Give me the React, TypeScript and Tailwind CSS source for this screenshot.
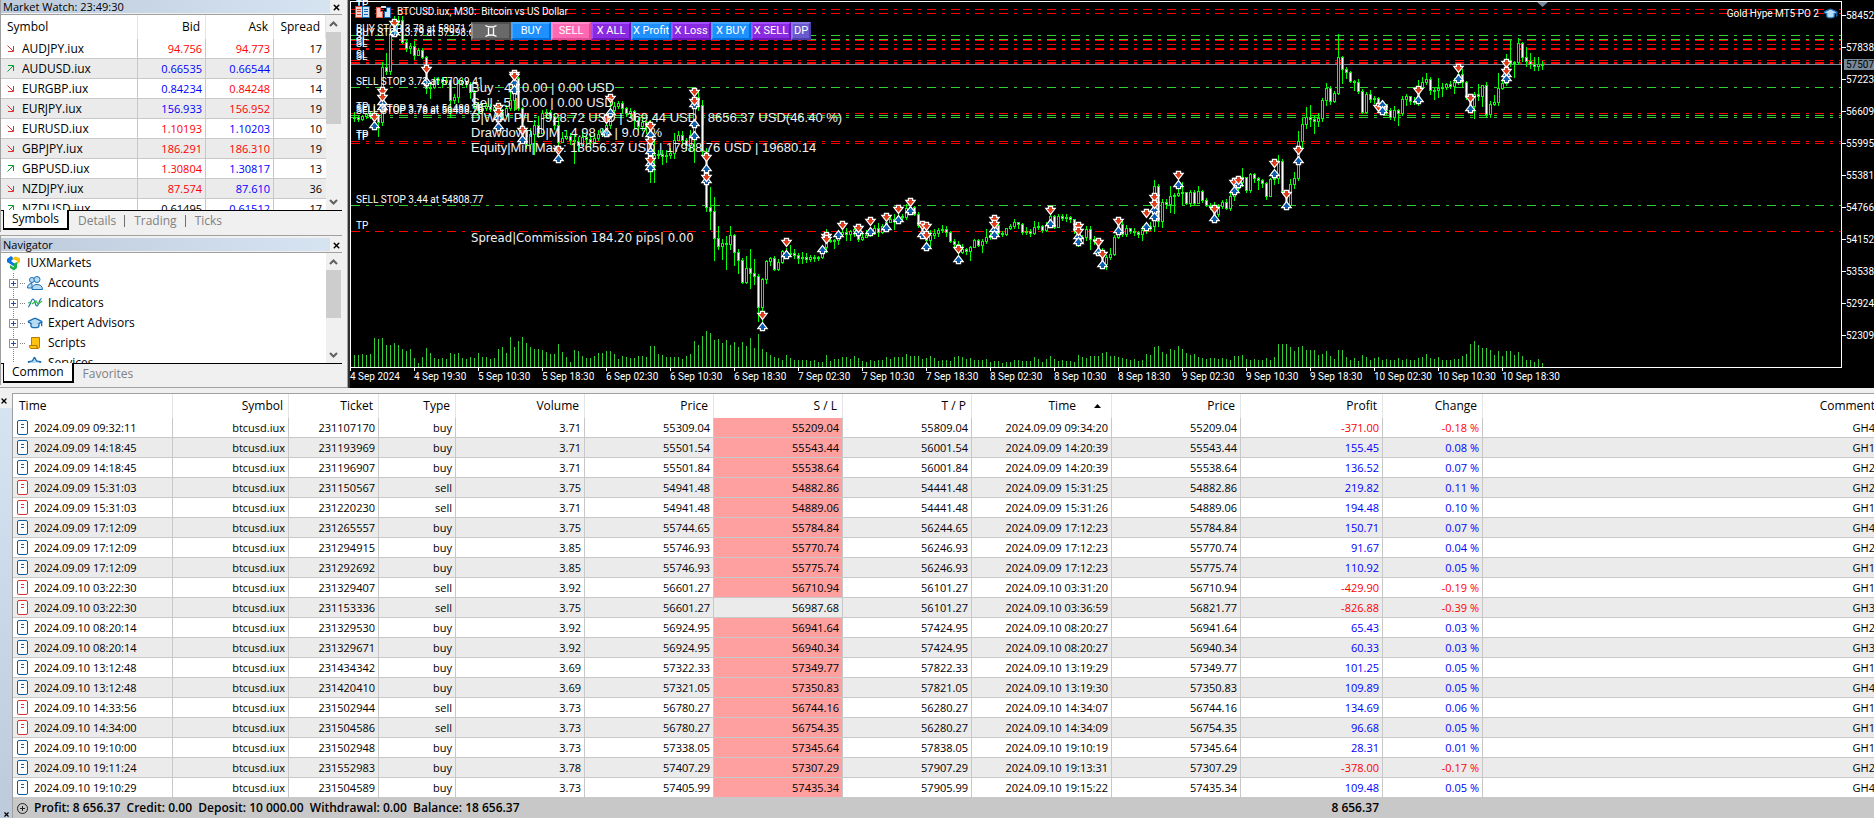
import { useState } from "react";
import type { ReactNode } from "react";
import { GraduationCap, Star, X } from "lucide-react";
import clsx from "clsx";

const BAR_STEP = 4;
const FIRST_BAR = 4;
const AXIS_Y = 367;
const barX = (i: number) => FIRST_BAR + i * BAR_STEP;

/* ---------- data ---------- */

type Quote = { symbol: string; up: boolean; bid: string; bidTone: Tone; ask: string; askTone: Tone; spread: number };
type Tone = "red" | "blue" | "black";

const tones: Record<Tone, string> = { red: "text-[#ff0000]", blue: "text-[#0000ff]", black: "text-black" };

const quotes: Quote[] = [
  { symbol: "AUDJPY.iux", up: false, bid: "94.756", bidTone: "red", ask: "94.773", askTone: "red", spread: 17 },
  { symbol: "AUDUSD.iux", up: true, bid: "0.66535", bidTone: "blue", ask: "0.66544", askTone: "blue", spread: 9 },
  { symbol: "EURGBP.iux", up: false, bid: "0.84234", bidTone: "blue", ask: "0.84248", askTone: "red", spread: 14 },
  { symbol: "EURJPY.iux", up: false, bid: "156.933", bidTone: "blue", ask: "156.952", askTone: "red", spread: 19 },
  { symbol: "EURUSD.iux", up: false, bid: "1.10193", bidTone: "red", ask: "1.10203", askTone: "blue", spread: 10 },
  { symbol: "GBPJPY.iux", up: false, bid: "186.291", bidTone: "red", ask: "186.310", askTone: "red", spread: 19 },
  { symbol: "GBPUSD.iux", up: true, bid: "1.30804", bidTone: "red", ask: "1.30817", askTone: "blue", spread: 13 },
  { symbol: "NZDJPY.iux", up: false, bid: "87.574", bidTone: "red", ask: "87.610", askTone: "blue", spread: 36 },
  { symbol: "NZDUSD.iux", up: true, bid: "0.61495", bidTone: "black", ask: "0.61512", askTone: "blue", spread: 17 },
];

// time, ticket, type, volume, price, s/l, t/p, close time, close price, profit, change, comment
const deals: string[][] = [
  ["2024.09.09 09:32:11", "231107170", "buy", "3.71", "55309.04", "55209.04", "55809.04", "2024.09.09 09:34:20", "55209.04", "-371.00", "-0.18 %", "GH4"],
  ["2024.09.09 14:18:45", "231193969", "buy", "3.71", "55501.54", "55543.44", "56001.54", "2024.09.09 14:20:39", "55543.44", "155.45", "0.08 %", "GH1"],
  ["2024.09.09 14:18:45", "231196907", "buy", "3.71", "55501.84", "55538.64", "56001.84", "2024.09.09 14:20:39", "55538.64", "136.52", "0.07 %", "GH2"],
  ["2024.09.09 15:31:03", "231150567", "sell", "3.75", "54941.48", "54882.86", "54441.48", "2024.09.09 15:31:25", "54882.86", "219.82", "0.11 %", "GH2"],
  ["2024.09.09 15:31:03", "231220230", "sell", "3.71", "54941.48", "54889.06", "54441.48", "2024.09.09 15:31:26", "54889.06", "194.48", "0.10 %", "GH1"],
  ["2024.09.09 17:12:09", "231265557", "buy", "3.75", "55744.65", "55784.84", "56244.65", "2024.09.09 17:12:23", "55784.84", "150.71", "0.07 %", "GH4"],
  ["2024.09.09 17:12:09", "231294915", "buy", "3.85", "55746.93", "55770.74", "56246.93", "2024.09.09 17:12:23", "55770.74", "91.67", "0.04 %", "GH2"],
  ["2024.09.09 17:12:09", "231292692", "buy", "3.85", "55746.93", "55775.74", "56246.93", "2024.09.09 17:12:23", "55775.74", "110.92", "0.05 %", "GH1"],
  ["2024.09.10 03:22:30", "231329407", "sell", "3.92", "56601.27", "56710.94", "56101.27", "2024.09.10 03:31:20", "56710.94", "-429.90", "-0.19 %", "GH1"],
  ["2024.09.10 03:22:30", "231153336", "sell", "3.75", "56601.27", "56987.68", "56101.27", "2024.09.10 03:36:59", "56821.77", "-826.88", "-0.39 %", "GH3"],
  ["2024.09.10 08:20:14", "231329530", "buy", "3.92", "56924.95", "56941.64", "57424.95", "2024.09.10 08:20:27", "56941.64", "65.43", "0.03 %", "GH2"],
  ["2024.09.10 08:20:14", "231329671", "buy", "3.92", "56924.95", "56940.34", "57424.95", "2024.09.10 08:20:27", "56940.34", "60.33", "0.03 %", "GH3"],
  ["2024.09.10 13:12:48", "231434342", "buy", "3.69", "57322.33", "57349.77", "57822.33", "2024.09.10 13:19:29", "57349.77", "101.25", "0.05 %", "GH1"],
  ["2024.09.10 13:12:48", "231420410", "buy", "3.69", "57321.05", "57350.83", "57821.05", "2024.09.10 13:19:30", "57350.83", "109.89", "0.05 %", "GH4"],
  ["2024.09.10 14:33:56", "231502944", "sell", "3.73", "56780.27", "56744.16", "56280.27", "2024.09.10 14:34:07", "56744.16", "134.69", "0.06 %", "GH1"],
  ["2024.09.10 14:34:00", "231504586", "sell", "3.73", "56780.27", "56754.35", "56280.27", "2024.09.10 14:34:09", "56754.35", "96.68", "0.05 %", "GH1"],
  ["2024.09.10 19:10:00", "231502948", "buy", "3.73", "57338.05", "57345.64", "57838.05", "2024.09.10 19:10:19", "57345.64", "28.31", "0.01 %", "GH1"],
  ["2024.09.10 19:11:24", "231552983", "buy", "3.78", "57407.29", "57307.29", "57907.29", "2024.09.10 19:13:31", "57307.29", "-378.00", "-0.17 %", "GH2"],
  ["2024.09.10 19:10:29", "231504589", "buy", "3.73", "57405.99", "57435.34", "57905.99", "2024.09.10 19:15:22", "57435.34", "109.48", "0.05 %", "GH4"],
];

// close / high / low of every bar, on the chart's vertical scale
const bars: number[][] = `
117 112 121,119 116 121,116 115 120,114 113 118,116 112 118,115 108 128,122 114 136,67 62 125,71 53 74,34 30 74,
22 16 36,20 16 25,42 16 43,48 40 51,46 43 53,55 41 59,50 48 52,57 48 58,88 56 93,87 84 98,
80 77 88,79 77 84,82 77 87,80 77 84,100 80 117,97 94 103,83 80 102,81 78 85,84 82 87,92 82 98,
104 90 108,110 102 113,108 103 112,106 103 110,109 104 111,107 105 110,112 106 126,115 109 118,108 105 116,100 90 110,
78 72 110,108 77 110,130 107 137,144 130 148,134 128 148,125 120 154,133 116 137,113 110 130,112 109 118,116 110 119,
125 113 129,142 118 160,138 132 142,136 130 139,140 133 144,141 134 163,145 137 151,137 131 144,139 134 143,142 134 148,
138 133 143,134 130 140,131 128 136,125 119 135,110 98 128,106 102 112,103 101 108,108 101 113,113 107 116,111 108 116,
120 110 128,126 118 131,122 118 130,127 121 133,158 120 182,155 140 182,154 150 158,156 150 164,155 150 162,153 148 158,
140 133 158,135 131 140,140 131 145,145 138 150,135 130 150,97 88 162,105 92 110,151 100 154,207 148 211,211 187 229,
238 197 260,246 226 249,243 239 259,244 236 269,235 226 249,252 234 265,260 249 273,282 258 283,268 256 283,273 249 288,
276 259 284,307 274 321,279 278 322,261 260 283,258 257 265,269 256 270,262 259 270,251 250 263,254 248 258,253 245 256,
255 249 258,258 253 263,257 252 263,259 253 262,257 255 261,258 255 261,257 256 260,247 245 258,240 229 252,241 238 242,
240 239 248,234 230 244,232 228 236,234 228 240,231 230 240,229 227 236,239 228 241,237 233 240,235 230 237,232 228 236,
228 225 234,232 223 236,226 224 233,222 218 228,219 216 222,219 214 229,216 212 221,217 214 219,208 204 219,207 204 214,
214 206 215,225 212 227,233 224 238,240 230 245,235 230 246,233 229 238,230 228 236,229 225 232,232 226 236,241 231 242,
244 239 248,252 241 255,249 244 253,251 248 254,247 246 260,240 239 247,245 239 246,241 239 252,237 229 243,235 233 239,
225 219 238,233 222 234,234 231 236,228 228 235,226 224 229,222 219 228,224 222 228,232 223 234,231 227 234,233 229 236,
227 221 234,226 222 229,230 225 232,225 222 231,216 214 226,227 215 228,216 214 227,218 214 220,217 214 221,219 216 222,
230 219 233,242 229 246,237 235 242,229 226 240,239 226 249,241 236 244,251 240 254,264 248 266,257 255 269,254 248 259,
237 235 255,224 222 238,234 221 236,228 225 236,231 228 233,232 228 235,234 231 237,230 226 240,227 224 233,226 222 230,
186 180 231,221 184 226,202 199 227,204 199 208,196 186 212,195 193 213,193 186 196,192 182 204,203 192 204,192 190 206,
203 190 205,191 186 203,200 190 202,205 198 206,206 203 209,214 202 217,206 204 216,202 200 208,208 199 209,196 193 210,
188 185 200,182 178 190,177 168 186,190 178 192,174 173 192,178 173 182,180 177 189,183 179 187,196 182 199,179 178 196,
178 172 184,161 155 183,191 159 193,205 190 208,184 179 206,178 172 188,141 131 180,124 118 147,117 107 128,119 105 126,
121 115 133,118 113 126,100 98 121,88 83 105,101 86 104,93 91 102,57 34 94,69 56 83,72 67 78,81 71 82,
82 80 90,91 79 93,112 89 113,94 92 113,99 90 102,98 96 103,107 97 112,104 102 110,110 104 114,117 108 119,
110 106 120,113 109 125,99 96 115,96 94 105,101 96 104,102 97 104,87 80 105,82 77 89,79 73 84,90 77 94,
90 87 99,88 78 97,87 83 96,84 83 89,86 81 88,82 78 93,74 69 84,82 69 86,97 81 99,106 95 108,
94 92 118,96 84 100,85 85 106,114 82 116,104 101 117,102 95 105,88 73 105,83 80 89,62 54 85,63 40 66,
62 61 77,43 38 64,57 42 61,61 47 66,64 53 68,66 57 70,64 57 70,65 61 69`
  .trim()
  .split(",")
  .map((bar) => bar.trim().split(" ").map(Number));

const volumes = [
  12, 12, 13, 12, 13, 29, 28, 29, 22, 22, 24, 22, 18, 16, 18, 9, 4, 10, 19, 14, 9, 8, 9, 8, 14, 13, 14, 9, 8, 10, 9, 14,
  10, 10, 8, 9, 18, 20, 14, 30, 20, 26, 30, 24, 20, 18, 18, 17, 15, 13, 13, 23, 15, 10, 5, 17, 16, 11, 9, 9, 11, 14, 14,
  16, 16, 13, 8, 11, 10, 9, 9, 11, 11, 10, 21, 21, 13, 12, 10, 10, 10, 10, 8, 11, 13, 26, 22, 31, 36, 34, 27, 28, 24, 27,
  22, 25, 20, 25, 21, 29, 19, 33, 18, 15, 12, 10, 9, 7, 12, 9, 7, 7, 7, 7, 6, 7, 5, 5, 12, 6, 8, 8, 10, 10, 8, 11, 9, 6,
  5, 7, 6, 7, 7, 10, 8, 10, 10, 10, 13, 11, 11, 11, 8, 9, 11, 9, 6, 7, 7, 6, 10, 11, 10, 8, 9, 7, 7, 7, 8, 5, 6, 6, 4, 5,
  5, 7, 7, 6, 6, 6, 10, 8, 5, 8, 11, 8, 6, 7, 6, 6, 5, 12, 10, 9, 11, 11, 11, 14, 15, 11, 11, 10, 9, 8, 7, 8, 6, 7, 13,
  12, 20, 21, 15, 13, 18, 17, 21, 18, 14, 12, 13, 10, 9, 8, 9, 9, 8, 9, 8, 7, 11, 11, 12, 8, 7, 8, 7, 7, 9, 7, 10, 23, 23,
  23, 20, 16, 20, 21, 17, 17, 17, 12, 13, 16, 11, 8, 17, 17, 10, 7, 9, 6, 12, 10, 7, 9, 10, 7, 8, 7, 7, 9, 7, 8, 7, 7, 9,
  10, 13, 9, 8, 10, 7, 7, 7, 8, 8, 11, 13, 23, 26, 22, 19, 19, 17, 12, 16, 11, 16, 16, 12, 15, 11, 7, 7, 5, 8, 4,
];

// bar index, then sell marks and buy marks
const trades: [number, number[], number[]][] = [
  [5, [117], [126]], [7, [91, 97], [103, 108]], [10, [23], [33]], [18, [69], [82]], [36, [107, 112], [118, 127]],
  [40, [74, 76], [83, 90]], [42, [130], [140]], [51, [150], [159]], [63, [119], [133]], [64, [98], [113]],
  [74, [126, 141, 160], [135, 152, 164, 168]], [85, [92, 101], [105, 124, 136]], [88, [157, 177], [169, 181]],
  [102, [315], [327]], [108, [242], [255]], [117, [], [250]], [118, [236, 239], []], [121, [], [235]], [122, [225], []],
  [126, [228], [232]], [129, [221], [232]], [133, [217], [228]], [136, [209], [220]], [139, [202], [211]],
  [142, [225], [235]], [143, [226, 235], [247]], [151, [249], [260]], [160, [219, 224], [230, 235]], [174, [210], [224]],
  [181, [226, 231], [237, 242]], [186, [242], [252]], [187, [254], [265]], [191, [221], [231]], [198, [213], [227]],
  [200, [197, 204], [210, 217]], [206, [175], [185]], [215, [209], [219]], [220, [182], [191]], [221, [180], [184]],
  [230, [163], [174]], [233, [194], [206]], [236, [150], [161]], [256, [107], []], [257, [], [105, 111]],
  [266, [90], [100]], [276, [68], [79]], [279, [98], [109]], [288, [63, 71], [75, 79]],
];

const levels: { y: number; color: string; thick?: boolean }[] = [
  { y: 9, color: "#ff0000" }, { y: 13, color: "#ff0000" }, { y: 35, color: "#32cd32" }, { y: 39, color: "#32cd32" },
  { y: 40, color: "#ff0000" }, { y: 44, color: "#ff0000" }, { y: 48, color: "#ff0000", thick: true }, { y: 60, color: "#ff0000" },
  { y: 62, color: "#ff0000", thick: true }, { y: 87, color: "#32cd32" }, { y: 113, color: "#ff0000" }, { y: 115, color: "#32cd32" },
  { y: 117, color: "#32cd32" }, { y: 141, color: "#ff0000" }, { y: 143, color: "#ff0000" }, { y: 205, color: "#32cd32" },
  { y: 231, color: "#ff0000" },
];

const levelLabels: [number, string][] = [
  [5, "TP"], [8, "TP"], [32, "BUY STOP 3.78 at 58071.21"], [36, "BUY STOP 3.79 at 57998.61"], [40, "SL"], [45, "SL"], [47, "SL"],
  [58, "SL"], [60, "SL"], [85, "SELL STOP 3.73 at 57069.41"], [110, "TP"], [112, "SELL STOP 3.76 at 56480.75"],
  [114, "SELL STOP 3.78 at 56438.26"], [138, "TP"], [140, "TP"], [203, "SELL STOP 3.44 at 54808.77"], [229, "TP"],
];

const timeLabels = [
  "4 Sep 2024", "4 Sep 19:30", "5 Sep 10:30", "5 Sep 18:30", "6 Sep 02:30", "6 Sep 10:30", "6 Sep 18:30", "7 Sep 02:30",
  "7 Sep 10:30", "7 Sep 18:30", "8 Sep 02:30", "8 Sep 10:30", "8 Sep 18:30", "9 Sep 02:30", "9 Sep 10:30", "9 Sep 18:30",
  "10 Sep 02:30", "10 Sep 10:30", "10 Sep 18:30",
];

const priceLabels = [
  "58452.", "57838.", "57223.", "56609.", "55995.", "55381.", "54766.", "54152.", "53538.", "52924.", "52309.",
];

/* ---------- left panels ---------- */

const PanelTitle = ({ children }: { children: ReactNode }) => (
  <header className="flex h-[15px] items-center border-b border-[#a0a0a0]">
    <h2 className="h-[13px] flex-1 self-start bg-linear-to-r from-[#bccadb] to-[#d6e4f2] pl-[2px] text-[11px] leading-[13px] text-black">
      {children}
    </h2>
    <button aria-label="Close" className="flex w-3 justify-center">
      <X size={9} strokeWidth={4} />
    </button>
  </header>
);

const Chevron = ({ down }: { down?: boolean }) => (
  <svg width="9" height="6" viewBox="0 0 9 6" fill="none" stroke="#606060" strokeWidth="2">
    <path d={down ? "M1 1 L4.5 4.5 L8 1" : "M1 5 L4.5 1.5 L8 5"} />
  </svg>
);

const Scrollbar = ({ thumb }: { thumb: string }) => (
  <div className="flex w-4 shrink-0 flex-col items-center bg-[#f0f0f0] pr-px">
    <div className="flex h-[17px] items-center"><Chevron /></div>
    <div className={clsx("w-full bg-[#cdcdcd]", thumb)} />
    <div className="mt-auto flex h-[17px] items-center"><Chevron down /></div>
  </div>
);

const Tabs = ({ items }: { items: string[] }) => {
  const [active, setActive] = useState(items[0]);
  return (
    <div role="tablist" className="flex h-[22px] border-t border-black bg-[#f0f0f0] pl-[2px] text-xs leading-[18px]">
      {items.map((item, i) => (
        <button
          key={item}
          role="tab"
          aria-selected={item === active}
          onClick={() => setActive(item)}
          className={clsx(
            "h-5",
            item === active ? "-mt-px border border-t-0 border-r-2 border-b-2 border-black bg-white px-2 text-black" : "px-[9px] text-[#808080]",
          )}
        >
          <span className={clsx("relative", i > 1 && item !== active && "before:absolute before:-left-[10px] before:top-[3px] before:h-3 before:w-px before:bg-[#707070]")}>
            {item}
          </span>
        </button>
      ))}
    </div>
  );
};

const TrendArrow = ({ up }: { up: boolean }) => (
  <svg width="7" height="7" viewBox="0 0 7 7" fill="none" stroke={up ? "#00a02a" : "#d93030"} className="ml-[6px]">
    <path d={up ? "M0.5 6.5 L6 1 M1 0.5 H6.5 V6" : "M0.5 0.5 L6 6 M6.5 1 V6.5 H1"} />
  </svg>
);

const MarketWatch = () => (
  <section className="border-l border-[#a0a0a0]">
    <PanelTitle>Market Watch: 23:49:30</PanelTitle>
    <div className="flex h-[195px] overflow-hidden bg-white">
      <table className="flex-1 table-fixed border-separate border-spacing-0 self-start">
        <colgroup>
          <col />
          <col className="w-[68px]" />
          <col className="w-[68px]" />
          <col className="w-[52px]" />
        </colgroup>
        <thead>
          <tr className="h-6 text-xs">
            {["Symbol", "Bid", "Ask", "Spread"].map((name, i) => (
              <th key={name} className={clsx("border-r border-[#e5e5e5] font-normal", i ? "pr-[5px] text-right" : "pl-[6px] text-left")}>
                {name}
              </th>
            ))}
          </tr>
        </thead>
        <tbody>
          {quotes.map((q) => (
            <tr key={q.symbol} className="h-5 text-[11px] leading-[19px] even:bg-[#ebebeb] [&>td]:border-b [&>td]:border-[#c8c8c8] [&>td]:p-0">
              <td className="border-r">
                <div className="flex items-center gap-2 text-xs leading-[19px]">
                  <TrendArrow up={q.up} />
                  {q.symbol}
                </div>
              </td>
              <td className={clsx("border-r text-right", tones[q.bidTone])}><span className="pr-[3px]">{q.bid}</span></td>
              <td className={clsx("border-r text-right", tones[q.askTone])}><span className="pr-[3px]">{q.ask}</span></td>
              <td className="text-right"><span className="pr-1">{q.spread}</span></td>
            </tr>
          ))}
        </tbody>
      </table>
      <Scrollbar thumb="h-[92px]" />
    </div>
    <Tabs items={["Symbols", "Details", "Trading", "Ticks"]} />
  </section>
);

const BrandIcon = () => (
  <svg width="15" height="15" viewBox="0 0 15 15">
    <path d="M1 3 L5 0 L8 2.5 L5 5 L9 8 V11 L1 6 Z" fill="#0a74e0" />
    <path d="M6 3 L9 0.5 L14 2 V6 L11 8.5 V5 L9 4 Z" fill="#ffc20e" />
    <path d="M4 9 L8 11.5 V7.5 L11 6 V12 L8 14.5 L4 12 Z" fill="#19b14b" />
  </svg>
);

const AccountsIcon = () => (
  <svg width="16" height="16" viewBox="0 0 16 16" fill="#b9dcf5" stroke="#1c6fb5">
    <circle cx="5" cy="5" r="2.5" />
    <path d="M0.5 13 C0.5 10 2 8.5 5 8.5 V13 Z" />
    <circle cx="10" cy="4.5" r="3" />
    <path d="M5 14.5 C5 11 7 9.5 10 9.5 S15.500 11 15.500 14.500 Z" />
  </svg>
);

const IndicatorsIcon = () => (
  <svg width="16" height="16" viewBox="0 0 16 16" fill="none">
    <path d="M1 12 C3 12 4 4 6 4 S8 11 10 11 S12 4 14.500 3.500" stroke="#1c6fb5" strokeWidth="1.2" />
    <path d="M1 8 L4 7 M5 9 L9 6 L11 9 L15 6" stroke="#35c04a" strokeWidth="1.3" />
  </svg>
);

const ScriptsIcon = () => (
  <svg width="16" height="16" viewBox="0 0 16 16" fill="#ffc20e" stroke="#b87a00">
    <path d="M4.500 2.500 H12.500 V12 C12.500 14 10 14 10 12 V10.500 H4.500 Z" />
    <path d="M2.500 10.500 H9.500 C9.500 12 10 13.500 11 13.500 H4 C2.500 13.500 2.500 12 2.500 10.500 Z" />
  </svg>
);

const navItems: { label: string; icon: ReactNode }[] = [
  { label: "Accounts", icon: <AccountsIcon /> },
  { label: "Indicators", icon: <IndicatorsIcon /> },
  { label: "Expert Advisors", icon: <GraduationCap size={16} fill="#b9dcf5" stroke="#1c6fb5" /> },
  { label: "Scripts", icon: <ScriptsIcon /> },
  { label: "Services", icon: <Star size={15} fill="#b9dcf5" stroke="#1c6fb5" /> },
];

const Expander = ({ leaf }: { leaf?: boolean }) => (
  <svg width="17" height="20" viewBox="0 0 17 20" fill="none" shapeRendering="crispEdges">
    <path d="M4.500 0 V20" stroke="#808080" strokeDasharray="1 1" />
    {!leaf && (
      <>
        <path d="M11 10.500 H16" stroke="#808080" strokeDasharray="1 1" />
        <rect x="0.500" y="6.500" width="8" height="8" fill="#fff" stroke="#919191" />
        <path d="M2 10.500 H7 M4.500 8 V13" stroke="#2a4a9c" />
      </>
    )}
  </svg>
);

const Navigator = () => (
  <section className="border-t border-l border-[#a0a0a0] pt-[2px]">
    <PanelTitle>Navigator</PanelTitle>
    <div className="flex h-[110px] overflow-hidden bg-white text-xs">
      <ul className="flex-1">
        <li className="flex h-5 items-center gap-[6px] pl-[5px]">
          <BrandIcon />
          IUXMarkets
        </li>
        {navItems.map((item) => (
          <li key={item.label} className="flex h-5 items-center pl-2">
            <Expander leaf={item.label === "Services"} />
            <span className="flex w-[22px] pl-px">{item.icon}</span>
            {item.label}
          </li>
        ))}
      </ul>
      <Scrollbar thumb="h-12" />
    </div>
    <Tabs items={["Common", "Favorites"]} />
  </section>
);

/* ---------- chart ---------- */

const Candles = () => (
  <g shapeRendering="crispEdges">
    {bars.map(([close, high, low], i) => {
      const open = i ? bars[i - 1][0] : 117;
      const x = barX(i);
      const top = Math.min(open, close);
      return (
        <g key={i} stroke="#00ff00">
          <path d={`M${x + 0.5} ${Math.min(high, top)} V${Math.max(low, open, close) + 1}`} />
          <rect x={x - 0.5} y={top + 0.5} width="2" height={Math.max(Math.abs(open - close), 1)} fill={close > open ? "#ffffff" : "#000000"} />
        </g>
      );
    })}
  </g>
);

const Mark = ({ x, y, sell }: { x: number; y: number; sell?: boolean }) => (
  <path
    d={sell ? "M-1.500 -3 H1.500 V-1 H3.500 L0 3.500 L-3.500 -1 H-1.500 Z" : "M-1.500 3 H1.500 V1 H3.500 L0 -3.500 L-3.500 1 H-1.500 Z"}
    transform={`translate(${x + 0.5} ${y})`}
    fill={sell ? "#e03c1c" : "#0a5cb0"}
    stroke="#ffffff"
    strokeWidth="2.400"
    paintOrder="stroke"
  />
);

const Plot = () => (
  <svg className="h-full w-full" fill="none" fontFamily="Roboto, sans-serif" fontSize="10">
    <g shapeRendering="crispEdges">
      {volumes.map((v, i) => (
        <path key={i} d={`M${barX(i) + 0.5} ${AXIS_Y} V${AXIS_Y - v}`} stroke="#32cd32" />
      ))}
      {levels.map((l) => (
        <line
          key={l.y}
          x1="1"
          x2="100%"
          y1={l.thick ? l.y + 1 : l.y + 0.5}
          y2={l.thick ? l.y + 1 : l.y + 0.5}
          stroke={l.color}
          strokeWidth={l.thick ? 2 : 1}
          strokeDasharray="9 6 3 6"
        />
      ))}
      <line x1="0" x2="100%" y1="64.500" y2="64.500" stroke="#778899" />
    </g>
    <Candles />
    {trades.map(([bar, sells, buys]) => (
      <g key={bar}>
        {buys.map((y) => <Mark key={`b${y}`} x={barX(bar)} y={y} />)}
        {sells.map((y) => <Mark key={`s${y}`} x={barX(bar)} y={y} sell />)}
      </g>
    ))}
    <g fill="#ffffff">
      {levelLabels.map(([y, label]) => <text key={y} x="6" y={y}>{label}</text>)}
    </g>
    <path d="M1187 2 H1198 L1192.500 7 Z" fill="#778899" />
    <g shapeRendering="crispEdges" stroke="#ffffff">
      <line x1="0" x2="100%" y1="1.500" y2="1.500" />
      <line x1="0.500" x2="0.500" y1="1" y2="371" />
      <line x1="0" x2="100%" y1="367.500" y2="367.500" />
      {timeLabels.map((label, i) => <path key={label} d={`M${i * 64 + 0.5} 367 V371`} />)}
    </g>
    <g fill="#ffffff">
      {timeLabels.map((label, i) => <text key={label} x={i * 64} y="380">{label}</text>)}
    </g>
  </svg>
);

const PriceAxis = () => (
  <svg className="h-full w-[33px] shrink-0" fontFamily="Roboto, sans-serif" fontSize="10" fill="#ffffff">
    <g shapeRendering="crispEdges" stroke="#ffffff">
      <path d="M0.500 1 V368" />
      {priceLabels.map((label, i) => <path key={label} d={`M0 ${15.5 + i * 32} H5`} />)}
    </g>
    {priceLabels.map((label, i) => <text key={label} x="5" y={19 + i * 32}>{label}</text>)}
    <rect x="3" y="59" width="30" height="11" fill="#778899" />
    <text x="5" y="68" fill="#000000">57507.</text>
  </svg>
);

const tradeButtons = [
  { label: "BUY", style: "bg-[#1e90ff] border-t-[#45a5ff] border-l-[#45a5ff] border-r-[#0070dd] border-b-[#0070dd]" },
  { label: "SELL", style: "bg-[#ff69b4] border-t-[#ff8cc8] border-l-[#ff8cc8] border-r-[#e04a96] border-b-[#e04a96]" },
  { label: "X ALL", style: "bg-[#8a2be2] border-t-[#a44dff] border-l-[#a44dff] border-r-[#6c14bd] border-b-[#6c14bd]" },
  { label: "X Profit", style: "bg-[#1e90ff] border-t-[#45a5ff] border-l-[#45a5ff] border-r-[#0070dd] border-b-[#0070dd]" },
  { label: "X Loss", style: "bg-[#8a2be2] border-t-[#a44dff] border-l-[#a44dff] border-r-[#6c14bd] border-b-[#6c14bd]" },
  { label: "X BUY", style: "bg-[#1e90ff] border-t-[#45a5ff] border-l-[#45a5ff] border-r-[#0070dd] border-b-[#0070dd]" },
  { label: "X SELL", style: "bg-[#8a2be2] border-t-[#a44dff] border-l-[#a44dff] border-r-[#6c14bd] border-b-[#6c14bd]" },
];

const TradeButtons = () => (
  <div className="absolute top-[22px] left-[121px] flex h-[18px] font-['Roboto',sans-serif] text-[11px] leading-[14px] text-white">
    <button aria-label="Minimize panel" className="flex w-10 items-center justify-center border-2 border-t-[#505050] border-r-[#505050] border-b-[#505050] border-l-[#909090] bg-[#696969]">
      <svg width="12" height="12" viewBox="0 0 12 12" fill="none" stroke="#ffffff" strokeWidth="1.300">
        <path d="M0.500 0.500 C3 2.500 9 2.500 11.500 0.500 M0.500 11.500 C3 9.500 9 9.500 11.500 11.500 M3.500 2 V10 M8.500 2 V10" />
      </svg>
    </button>
    {tradeButtons.map((b) => (
      <button key={b.label} className={clsx("flex w-10 justify-center border-2 whitespace-nowrap", b.style)}>{b.label}</button>
    ))}
    <button className="flex w-5 justify-center border-2 border-t-[#8577e6] border-r-[#4c3ea8] border-b-[#4c3ea8] border-l-[#8577e6] bg-[#6a5acd]">DP</button>
  </div>
);

const OneClickIcon = () => (
  <svg width="15" height="12" viewBox="0 0 15 12" shapeRendering="crispEdges">
    <rect width="8" height="12" fill="#f7cfc8" />
    <rect x="7" width="8" height="12" fill="#cfe4f7" />
    <path d="M0 0 H7 V1 H0 Z M0 11 H7 V12 H0 Z M0 0 H1 V12 H0 Z M2 3 H6 V4 H2 Z M2 5 H6 V6 H2 Z M2 8 H6 V9 H2 Z" fill="#d9402a" />
    <path d="M7 0 H15 V1 H7 Z M7 11 H15 V12 H7 Z M14 0 H15 V12 H14 Z M9 3 H13 V4 H9 Z M9 5 H13 V6 H9 Z M9 8 H13 V9 H9 Z M7 0 H8 V12 H7 Z" fill="#1466b0" />
  </svg>
);

const DepthIcon = () => (
  <svg width="15" height="12" viewBox="0 0 15 12" shapeRendering="crispEdges">
    <path d="M0.500 1.500 H4.500 V5.500 H6.500 V11.500 H0.500 Z" fill="#f7cfc8" stroke="#e8604c" />
    <path d="M14.500 1.500 H10.500 V5.500 H8.500 V11.500 H14.500 Z" fill="#cfe4f7" stroke="#1466b0" />
    <path d="M5 0 H10 V2 H5 Z" fill="#e0e0e0" />
  </svg>
);

const stats = [
  "Buy : 4 | 0.00 | 0.00 USD",
  "Sell : 5 | 0.00 | 0.00 USD",
  "D|W|M P/L: -928.72 USD | 369.44 USD | 8656.37 USD(46.40 %)",
  "Drawdown D|M : 4.98 % | 9.07 %",
  "Equity|Min|Max : 18656.37 USD | 17988.76 USD | 19680.14",
];

const Chart = () => (
  <main className="relative flex min-w-0 flex-1 overflow-hidden border-l-2 border-[#303030] bg-black text-white">
    <div className="relative min-w-0 flex-1 overflow-hidden">
      <Plot />
      <div className="absolute top-[6px] left-[5px] flex items-center gap-[6px] font-['Roboto',sans-serif] text-[10px] leading-3 whitespace-pre">
        <OneClickIcon />
        <DepthIcon />
        <h1>{"BTCUSD.iux, M30:  Bitcoin vs US Dollar"}</h1>
      </div>
      <TradeButtons />
      <div className="absolute top-20 left-[121px] font-['Liberation_Sans',sans-serif] text-[13px] leading-[15px] whitespace-pre text-[#f0f0f0]">
        {stats.map((line) => <p key={line}>{line}</p>)}
      </div>
      <p className="absolute top-[230px] left-[121px] font-['DejaVu_Sans_Condensed','DejaVu_Sans',sans-serif] text-[13px] leading-4 text-[#f0f0f0]">
        Spread|Commission 184.20 pips| 0.00
      </p>
      <div className="absolute top-[6px] right-[3px] flex items-center gap-1 font-['Roboto',sans-serif] text-[10px] leading-3">
        Gold Hype MT5 PO 2
        <GraduationCap size={15} fill="#b9dcf5" stroke="#1c6fb5" />
      </div>
    </div>
    <PriceAxis />
  </main>
);

/* ---------- trade history ---------- */

const DealIcon = ({ sell }: { sell: boolean }) => (
  <svg width="11" height="15" viewBox="0 0 11 15" fill="#ffffff" stroke={sell ? "#d93030" : "#0a5c9e"} className="shrink-0">
    <rect x="0.500" y="0.500" width="10" height="14" rx="1.500" />
    <path d="M4 4.500 H7 M4 7.500 H7" />
  </svg>
);

const columns = ["Time", "Symbol", "Ticket", "Type", "Volume", "Price", "S / L", "T / P", "Time", "Price", "Profit", "Change", "Comment"];

const History = () => (
  <section className="flex">
    <aside className="flex w-3 shrink-0 flex-col">
      <button aria-label="Close toolbox" className="flex h-[15px] w-full items-center">
        <X size={8} strokeWidth={4} />
      </button>
      <div className="flex flex-1 items-end justify-center bg-linear-to-b from-[#d6e4f2] to-[#bccadb]">
        <X size={7} strokeWidth={4} />
      </div>
    </aside>
    <div className="min-w-0 flex-1 overflow-hidden border-t border-l border-[#a0a0a0] bg-white">
      <table className="w-[calc(100%+4px)] table-fixed border-separate border-spacing-0 text-right">
        <colgroup>
          <col className="w-[160px]" />
          <col className="w-[116px]" />
          <col className="w-[90px]" />
          <col className="w-[77px]" />
          <col className="w-[129px]" />
          <col className="w-[129px]" />
          <col className="w-[129px]" />
          <col className="w-[129px]" />
          <col className="w-[140px]" />
          <col className="w-[129px]" />
          <col className="w-[142px]" />
          <col className="w-[100px]" />
          <col />
        </colgroup>
        <thead>
          <tr className="h-6 text-xs">
            {columns.map((name, i) => (
              <th key={i} className={clsx("border-[#e5e5e5] p-0 font-normal", i < 12 ? "border-r pr-[5px]" : "pr-[3px]", i === 0 && "pl-[6px] text-left")}>
                {i === 8 ? (
                  <span className="flex items-center justify-end gap-[18px] pr-[5px]">
                    {name}
                    <svg width="7" height="4" viewBox="0 0 7 4"><path d="M0 4 L3.500 0 L7 4 Z" /></svg>
                  </span>
                ) : name}
              </th>
            ))}
          </tr>
        </thead>
        <tbody>
          {deals.map(([time, ticket, type, volume, price, sl, tp, closeTime, closePrice, profit, change, comment]) => {
            const tone = profit.startsWith("-") ? tones.red : tones.blue;
            return (
              <tr
                key={ticket}
                className="h-5 text-[11px] leading-[19px] even:bg-[#ebebeb] [&>td]:border-b [&>td]:border-[#c8c8c8] [&>td]:p-0 [&>td]:pr-[3px] [&>td:not(:last-child)]:border-r"
              >
                <td>
                  <div className="flex items-center gap-[6px] pl-1">
                    <DealIcon sell={type === "sell"} />
                    {time}
                  </div>
                </td>
                <td>btcusd.iux</td>
                <td>{ticket}</td>
                <td>{type}</td>
                <td>{volume}</td>
                <td>{price}</td>
                <td className={clsx(sl === closePrice && "bg-[#ffa0a0]")}>{sl}</td>
                <td>{tp}</td>
                <td>{closeTime}</td>
                <td>{closePrice}</td>
                <td className={tone}>{profit}</td>
                <td className={tone}>{change}</td>
                <td>{comment}</td>
              </tr>
            );
          })}
        </tbody>
        <tfoot>
          <tr className="h-5 bg-[#c8c8c8] text-xs leading-5 font-semibold">
            <td colSpan={10} className="p-0 text-left">
              <div className="flex items-center gap-[6px] pl-1">
                <svg width="11" height="11" viewBox="0 0 11 11" fill="none" stroke="#202020">
                  <circle cx="5.500" cy="5.500" r="5" />
                  <path d="M3 5.500 H8 M5.500 3 V8" />
                </svg>
                <span className="whitespace-pre">
                  {"Profit: 8 656.37  Credit: 0.00  Deposit: 10 000.00  Withdrawal: 0.00  Balance: 18 656.37"}
                </span>
              </div>
            </td>
            <td className="p-0 pr-1">8 656.37</td>
            <td colSpan={2} className="p-0" />
          </tr>
        </tfoot>
      </table>
    </div>
  </section>
);

export default function App() {
  return (
    <div className="flex h-screen flex-col overflow-hidden bg-[#f0f0f0] font-['Open_Sans',sans-serif] text-black">
      <div className="flex h-[388px] shrink-0">
        <div className="flex w-[348px] shrink-0 flex-col gap-[3px] border-r border-b border-[#a0a0a0] pr-[5px]">
          <MarketWatch />
          <Navigator />
        </div>
        <Chart />
      </div>
      <div className="mt-[5px] min-h-0 flex-1 overflow-hidden">
        <History />
      </div>
    </div>
  );
}
